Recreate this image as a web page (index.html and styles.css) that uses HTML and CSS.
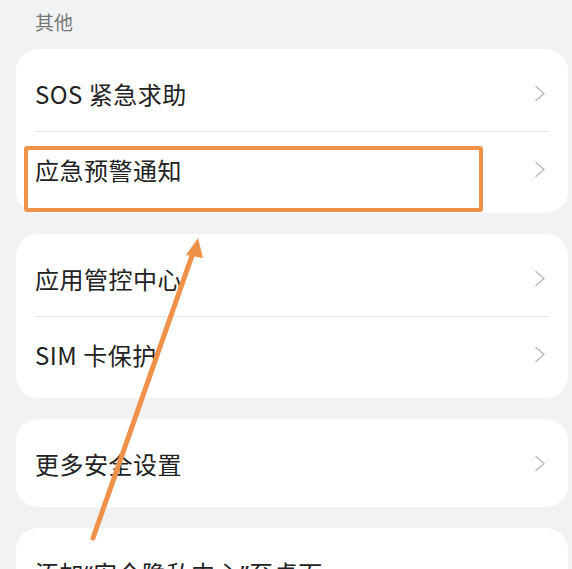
FILE: index.html
```html
<!DOCTYPE html>
<html>
<head>
  <meta charset="UTF-8">
  <title>其他设置</title>
  <link rel="stylesheet" href="styles.css">
</head>
<body>
  <div class="page">
    <div class="section-title">其他</div>

    <div class="card">
      <div class="row">
        <span class="label">SOS 紧急求助</span>
        <span class="chevron"><svg width="12" height="17" viewBox="0 0 12 17"><path d="M2 1.5 L10 8.5 L2 15.5" fill="none" stroke="#bcbcbc" stroke-width="1.6" stroke-linecap="round" stroke-linejoin="round"/></svg></span>
      </div>
      <div class="row">
        <span class="label">应急预警通知</span>
        <span class="chevron"><svg width="12" height="17" viewBox="0 0 12 17"><path d="M2 1.5 L10 8.5 L2 15.5" fill="none" stroke="#bcbcbc" stroke-width="1.6" stroke-linecap="round" stroke-linejoin="round"/></svg></span>
      </div>
    </div>

    <div class="card">
      <div class="row">
        <span class="label">应用管控中心</span>
        <span class="chevron"><svg width="12" height="17" viewBox="0 0 12 17"><path d="M2 1.5 L10 8.5 L2 15.5" fill="none" stroke="#bcbcbc" stroke-width="1.6" stroke-linecap="round" stroke-linejoin="round"/></svg></span>
      </div>
      <div class="row">
        <span class="label">SIM 卡保护</span>
        <span class="chevron"><svg width="12" height="17" viewBox="0 0 12 17"><path d="M2 1.5 L10 8.5 L2 15.5" fill="none" stroke="#bcbcbc" stroke-width="1.6" stroke-linecap="round" stroke-linejoin="round"/></svg></span>
      </div>
    </div>

    <div class="card">
      <div class="row">
        <span class="label">更多安全设置</span>
        <span class="chevron"><svg width="12" height="17" viewBox="0 0 12 17"><path d="M2 1.5 L10 8.5 L2 15.5" fill="none" stroke="#bcbcbc" stroke-width="1.6" stroke-linecap="round" stroke-linejoin="round"/></svg></span>
      </div>
    </div>

    <div class="card">
      <div class="row">
        <span class="label">添加<span class="quote">“</span>安全隐私中心<span class="quote">”</span>至桌面</span>
      </div>
    </div>

    <!-- annotation overlay -->
    <div class="highlight"></div>
    <svg class="arrow" width="572" height="569" viewBox="0 0 572 569">
      <line x1="93" y1="538" x2="194" y2="250" stroke="#f0914a" stroke-width="5" stroke-linecap="round"/>
      <polygon points="198,238 186,255 203,258" fill="#f0914a"/>
    </svg>
  </div>
</body>
</html>
```

FILE: styles.css
```css
html, body { margin: 0; padding: 0; }
body { background: #f1f2f4; font-family: "Noto Sans CJK SC", "Noto Sans", sans-serif; color: #222; overflow: hidden; }
.page { position: relative; width: 572px; height: 569px; overflow: hidden; }
.section-title { font-size: 19px; color: #777; padding: 8px 0 0 35px; height: 49px; box-sizing: border-box; line-height: 28px; }
.card { background: #fff; margin: 0 4px 21px 16px; border-radius: 22px; padding: 6px 0; }
.row { height: 76px; display: flex; align-items: center; justify-content: space-between; margin: 0 19px; }
.row + .row { border-top: 1px solid #e8e8e8; height: 75px; }
.label { font-size: 24px; letter-spacing: 0.5px; }
.quote { font-family: "Noto Sans", sans-serif; }
.chevron { display: flex; margin-right: 3px; }
.highlight { position: absolute; left: 24px; top: 146px; width: 459px; height: 66px; box-sizing: border-box; border: 4px solid #f0914a; border-radius: 3px; }
.arrow { position: absolute; left: 0; top: 0; }
```
